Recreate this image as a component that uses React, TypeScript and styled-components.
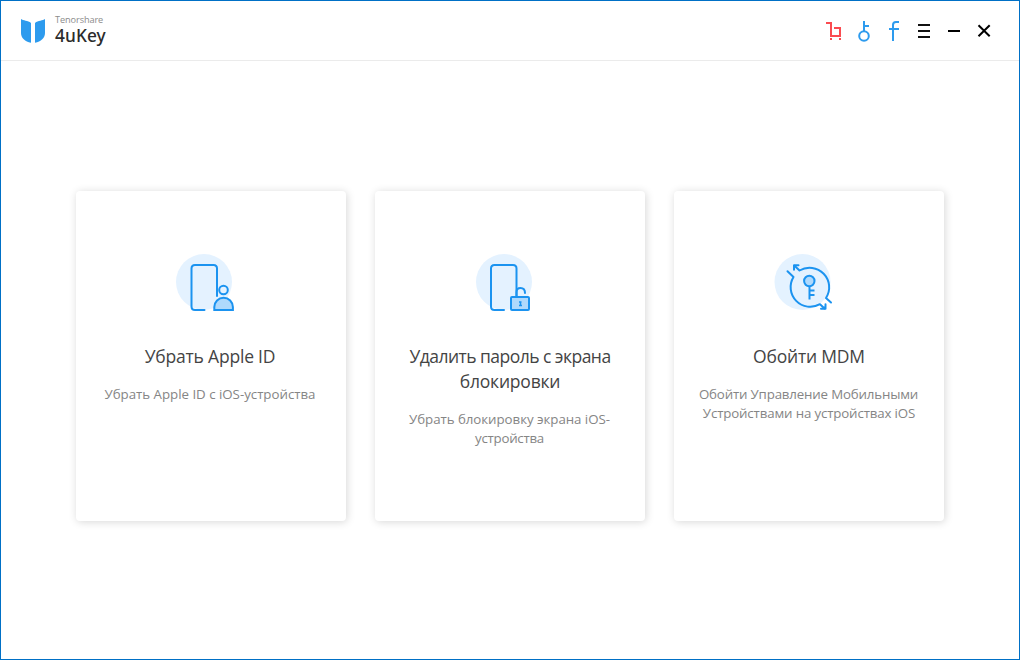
import React from 'react';
import styled, { createGlobalStyle } from 'styled-components';

const GlobalStyle = createGlobalStyle`
  * { box-sizing: border-box; }
  body { margin: 0; background: #fff; }
`;

const Window = styled.div`
  width: 1020px;
  height: 660px;
  display: flex;
  flex-direction: column;
  background: #fff;
  border: 1px solid #0070c6;
  font-family: 'Open Sans', 'Noto Sans', sans-serif;
  overflow: hidden;
`;

const Header = styled.header`
  height: 60px;
  flex: none;
  display: flex;
  align-items: center;
  justify-content: space-between;
  padding: 0 20px 0 19px;
  border-bottom: 1px solid #ebebeb;
`;

const Brand = styled.div`
  display: flex;
  align-items: center;
  gap: 9px;
`;

const BrandText = styled.div`
  display: flex;
  flex-direction: column;
  padding-bottom: 3px;
`;

const Vendor = styled.span`
  font-size: 9.2px;
  line-height: 12px;
  letter-spacing: -0.1px;
  color: #8c8c8c;
`;

const Product = styled.span`
  font-family: 'Noto Sans', sans-serif;
  font-size: 17.3px;
  font-weight: 500;
  line-height: 19px;
  letter-spacing: 0.1px;
  color: #2b2b2b;
`;

const Actions = styled.nav`
  display: flex;
`;

const ActionButton = styled.button`
  width: 30px;
  height: 30px;
  padding: 0;
  border: 0;
  background: none;
  svg { display: block; }
`;

const Cards = styled.main`
  display: flex;
  gap: 29px;
  padding: 130px 0 0 75px;
`;

const Card = styled.section`
  width: 270px;
  height: 330px;
  flex: none;
  display: flex;
  flex-direction: column;
  align-items: center;
  padding-top: 54px;
  border-radius: 4px;
  background: #fff;
  box-shadow: 1px 1px 8px rgba(0, 0, 0, 0.16);
  text-align: center;
`;

const Title = styled.h2`
  margin: 24px 0 16px;
  font-size: 17.5px;
  font-weight: 400;
  line-height: 25px;
  color: #444;
`;

const Description = styled.p`
  margin: 0;
  font-size: 13.3px;
  line-height: 19px;
  color: #858585;
`;

const Line = styled.span<{ $spacing?: number; $inset?: number }>`
  display: block;
  white-space: nowrap;
  letter-spacing: ${({ $spacing = 0 }) => $spacing}px;
  padding-right: ${({ $inset = 0 }) => $inset}px;
`;

const blue = '#1b93f0';

const Logo = () => (
  <svg width="26" height="26" viewBox="20 18 26 26" fill="#2d9bee">
    <path d="M21 19C23 21 28 20 31 23V42.7C25 41.5 21 38 21 33Z" />
    <path d="M45 19C43 21 38 20 35 23V42.7C41 41.5 45 38 45 33Z" />
  </svg>
);

const CartIcon = () => (
  <svg width="30" height="30" viewBox="819 16 30 30" fill="none" stroke="#fa4b50" strokeWidth="2">
    <path d="M826 23H831V36H840V28H834" />
    <path d="M830 39H832M839 39H841" />
  </svg>
);

const KeyIcon = () => (
  <svg width="30" height="30" viewBox="849 16 30 30" fill="none" stroke="#2d9bee" strokeWidth="2">
    <circle cx="864" cy="36" r="4.8" />
    <path d="M864 31V21M864 26H869" />
  </svg>
);

const FacebookIcon = () => (
  <svg width="30" height="30" viewBox="879 16 30 30" fill="none" stroke="#2d9bee" strokeWidth="2">
    <path d="M893 41V25Q893 22 896 22H899M889 29H899" />
  </svg>
);

const MenuIcon = () => (
  <svg width="30" height="30" viewBox="909 16 30 30" stroke="#111" strokeWidth="2">
    <path d="M918 25H930M918 31H930M918 37H930" />
  </svg>
);

const MinimizeIcon = () => (
  <svg width="30" height="30" viewBox="939 16 30 30" stroke="#000" strokeWidth="2">
    <path d="M948 31H960" />
  </svg>
);

const CloseIcon = () => (
  <svg width="30" height="30" viewBox="969 16 30 30" stroke="#000" strokeWidth="2">
    <path d="M978.5 25.2L989.7 36.2M989.7 25.2L978.5 36.2" />
  </svg>
);

const CardIcon = styled.svg`
  width: 80px;
  height: 75px;
  flex: none;
  fill: none;
  stroke: ${blue};
  stroke-width: 2;
  stroke-linecap: round;
  stroke-linejoin: round;
`;

const AppleIdIcon = () => (
  <CardIcon viewBox="6 0 80 75">
    <circle cx="39" cy="37" r="28" fill="#e4f2ff" stroke="none" />
    <path d="M39.5 65H30Q26.500 65 26.500 61.500V23.500Q26.500 20 30 20H48.500Q52 20 52 23.500V51" />
    <circle cx="58.500" cy="45" r="4.300" fill="#e4f2ff" />
    <path d="M49.300 65V62A9.200 9.200 0 0 1 67.900 62V65Z" fill="#afd9fc" strokeLinejoin="miter" />
  </CardIcon>
);

const UnlockIcon = () => (
  <CardIcon viewBox="5 0 80 75">
    <circle cx="39" cy="37" r="28" fill="#e4f2ff" stroke="none" />
    <path d="M39 65H29.500Q26 65 26 61.500V23.500Q26 20 29.500 20H48Q51.500 20 51.500 23.500V51" />
    <path d="M51.500 51V47Q51.500 43 55.500 43Q60 43 60 48" />
    <rect x="46" y="52" width="18" height="13" rx="1" fill="#afd9fc" />
    <path d="M54 57H56.500M55.500 57V60.500M54 60.500H57" strokeWidth="1.500" strokeLinecap="butt" />
  </CardIcon>
);

const MdmIcon = () => (
  <CardIcon viewBox="4 0 80 75">
    <circle cx="37.500" cy="37" r="28" fill="#e4f2ff" stroke="none" />
    <path d="M22.500 26.300L28.500 32A19.600 19.600 0 0 0 55 59.200L59.500 63.500" />
    <path d="M56 63.800H60.500V59.300" />
    <path d="M57.500 63.500H60.500V60.500Z" fill={blue} stroke="none" />
    <path d="M66 57.500L61 53A19.600 19.600 0 0 0 34.500 25.500L29.500 20.800" />
    <path d="M29 24.700V20.300H33.500" />
    <path d="M29 23.500V20.500H32Z" fill={blue} stroke="none" />
    <circle cx="44.300" cy="36" r="5.200" fill="#afd9fc" />
    <path d="M44.500 41.500V54.500M44.500 45.500H49.500M44.500 50H49.500" strokeLinecap="butt" />
  </CardIcon>
);

export default function App() {
  return (
    <>
      <GlobalStyle />
      <Window>
        <Header>
          <Brand>
            <Logo />
            <BrandText>
              <Vendor>Tenorshare</Vendor>
              <Product>4uKey</Product>
            </BrandText>
          </Brand>
          <Actions>
            <ActionButton aria-label="Cart"><CartIcon /></ActionButton>
            <ActionButton aria-label="Key"><KeyIcon /></ActionButton>
            <ActionButton aria-label="Facebook"><FacebookIcon /></ActionButton>
            <ActionButton aria-label="Menu"><MenuIcon /></ActionButton>
            <ActionButton aria-label="Minimize"><MinimizeIcon /></ActionButton>
            <ActionButton aria-label="Close"><CloseIcon /></ActionButton>
          </Actions>
        </Header>
        <Cards>
          <Card>
            <AppleIdIcon />
            <Title><Line $spacing={-0.2} $inset={2}>Убрать Apple ID</Line></Title>
            <Description><Line $spacing={-0.02} $inset={2}>Убрать Apple ID с iOS-устройства</Line></Description>
          </Card>
          <Card>
            <UnlockIcon />
            <Title>
              <Line $spacing={-0.53}>Удалить пароль с экрана</Line>
              <Line $spacing={-0.2}>блокировки</Line>
            </Title>
            <Description>
              <Line $spacing={-0.05} $inset={1}>Убрать блокировку экрана iOS-</Line>
              <Line $spacing={-0.25} $inset={1}>устройства</Line>
            </Description>
          </Card>
          <Card>
            <MdmIcon />
            <Title><Line $spacing={-0.2}>Обойти MDM</Line></Title>
            <Description>
              <Line $spacing={-0.17} $inset={1}>Обойти Управление Мобильными</Line>
              <Line $spacing={-0.15}>Устройствами на устройствах iOS</Line>
            </Description>
          </Card>
        </Cards>
      </Window>
    </>
  );
}
